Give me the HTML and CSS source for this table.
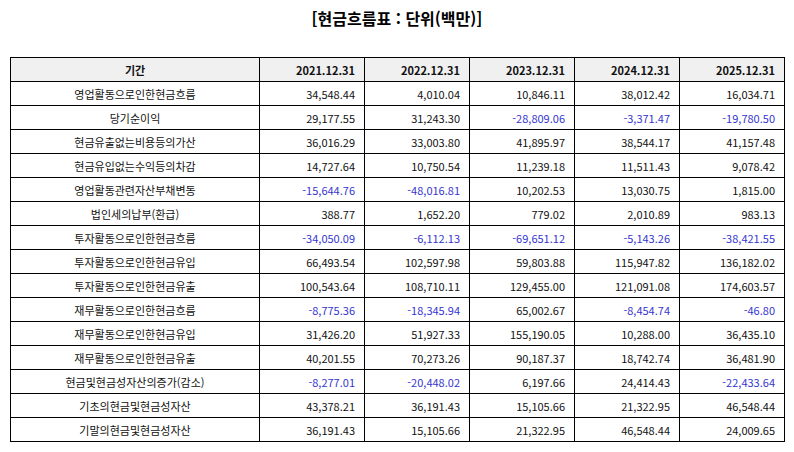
FILE: index.html
```html
<!DOCTYPE html>
<html lang="ko">
<head>
<meta charset="utf-8">
<title>현금흐름표</title>
<link rel="stylesheet" href="styles.css">
</head>
<body>
<div class="page">
  <h1 class="title">[현금흐름표 : 단위(백만)]</h1>
  <table class="cf">
    <colgroup>
      <col class="c-label"><col class="c-num"><col class="c-num"><col class="c-num"><col class="c-num"><col class="c-num">
    </colgroup>
    <thead>
      <tr><th>기간</th><th class="r">2021.12.31</th><th class="r">2022.12.31</th><th class="r">2023.12.31</th><th class="r">2024.12.31</th><th class="r">2025.12.31</th></tr>
    </thead>
    <tbody>
      <tr><td>영업활동으로인한현금흐름</td><td class="r">34,548.44</td><td class="r">4,010.04</td><td class="r">10,846.11</td><td class="r">38,012.42</td><td class="r">16,034.71</td></tr>
      <tr><td>당기순이익</td><td class="r">29,177.55</td><td class="r">31,243.30</td><td class="r neg">-28,809.06</td><td class="r neg">-3,371.47</td><td class="r neg">-19,780.50</td></tr>
      <tr><td>현금유출없는비용등의가산</td><td class="r">36,016.29</td><td class="r">33,003.80</td><td class="r">41,895.97</td><td class="r">38,544.17</td><td class="r">41,157.48</td></tr>
      <tr><td>현금유입없는수익등의차감</td><td class="r">14,727.64</td><td class="r">10,750.54</td><td class="r">11,239.18</td><td class="r">11,511.43</td><td class="r">9,078.42</td></tr>
      <tr><td>영업활동관련자산부채변동</td><td class="r neg">-15,644.76</td><td class="r neg">-48,016.81</td><td class="r">10,202.53</td><td class="r">13,030.75</td><td class="r">1,815.00</td></tr>
      <tr><td>법인세의납부(환급)</td><td class="r">388.77</td><td class="r">1,652.20</td><td class="r">779.02</td><td class="r">2,010.89</td><td class="r">983.13</td></tr>
      <tr><td>투자활동으로인한현금흐름</td><td class="r neg">-34,050.09</td><td class="r neg">-6,112.13</td><td class="r neg">-69,651.12</td><td class="r neg">-5,143.26</td><td class="r neg">-38,421.55</td></tr>
      <tr><td>투자활동으로인한현금유입</td><td class="r">66,493.54</td><td class="r">102,597.98</td><td class="r">59,803.88</td><td class="r">115,947.82</td><td class="r">136,182.02</td></tr>
      <tr><td>투자활동으로인한현금유출</td><td class="r">100,543.64</td><td class="r">108,710.11</td><td class="r">129,455.00</td><td class="r">121,091.08</td><td class="r">174,603.57</td></tr>
      <tr><td>재무활동으로인한현금흐름</td><td class="r neg">-8,775.36</td><td class="r neg">-18,345.94</td><td class="r">65,002.67</td><td class="r neg">-8,454.74</td><td class="r neg">-46.80</td></tr>
      <tr><td>재무활동으로인한현금유입</td><td class="r">31,426.20</td><td class="r">51,927.33</td><td class="r">155,190.05</td><td class="r">10,288.00</td><td class="r">36,435.10</td></tr>
      <tr><td>재무활동으로인한현금유출</td><td class="r">40,201.55</td><td class="r">70,273.26</td><td class="r">90,187.37</td><td class="r">18,742.74</td><td class="r">36,481.90</td></tr>
      <tr><td>현금및현금성자산의증가(감소)</td><td class="r neg">-8,277.01</td><td class="r neg">-20,448.02</td><td class="r">6,197.66</td><td class="r">24,414.43</td><td class="r neg">-22,433.64</td></tr>
      <tr><td>기초의현금및현금성자산</td><td class="r">43,378.21</td><td class="r">36,191.43</td><td class="r">15,105.66</td><td class="r">21,322.95</td><td class="r">46,548.44</td></tr>
      <tr><td>기말의현금및현금성자산</td><td class="r">36,191.43</td><td class="r">15,105.66</td><td class="r">21,322.95</td><td class="r">46,548.44</td><td class="r">24,009.65</td></tr>
    </tbody>
  </table>
</div>
</body>
</html>
```

FILE: styles.css
```css
html, body {
  margin: 0;
  padding: 0;
  background: #ffffff;
}
body {
  font-family: "Noto Sans CJK KR", "Noto Sans", "DejaVu Sans", sans-serif;
  color: #111111;
}
.page {
  padding: 7px 10px 0 10px;
}
.title {
  margin: 0;
  height: 50px;
  font-size: 16px;
  font-weight: bold;
  text-align: center;
  line-height: 22px;
  color: #000000;
}
.cf {
  width: 775px;
  border-collapse: collapse;
  table-layout: fixed;
  font-size: 11px;
}
.c-label { width: 249px; }
.c-num { width: 105px; }
.cf th, .cf td {
  border: 1px solid #000000;
  height: 23px;
  padding: 0 9px;
  line-height: 14px;
  text-align: center;
  white-space: nowrap;
}
.cf thead th {
  background: #f0f0f0;
  font-weight: bold;
  height: 23px;
}
.cf .r {
  text-align: right;
}
.cf .neg {
  color: #3535d0;
}
```
